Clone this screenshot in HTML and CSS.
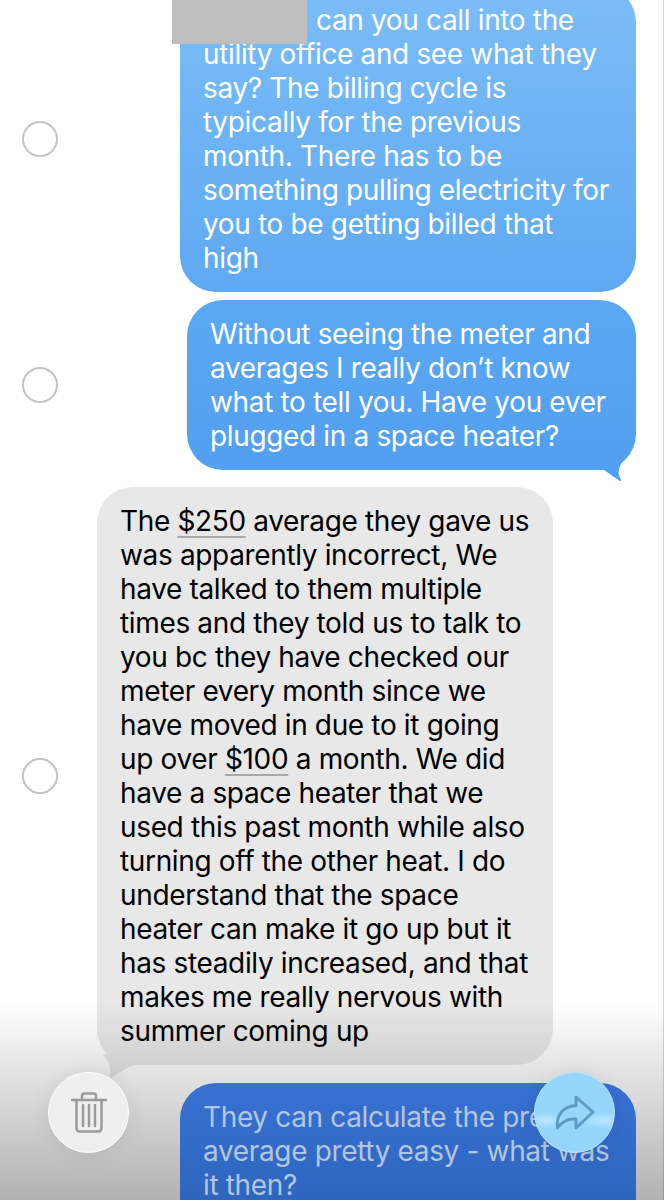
FILE: index.html
```html
<!DOCTYPE html>
<html lang="en">
<head>
    <meta charset="UTF-8">
    <meta name="viewport" content="width=device-width, initial-scale=1.0">
    <title>Messages</title>
    <link rel="stylesheet" href="styles.css">
</head>
<body>

<div class="screen">
    <div class="thread">
        <div class="row">
            <span class="radio"></span>
            <div class="bubble sent first">
                <span class="redacted"></span>
                <p class="indent">can you call into the<br>utility office and see what they<br>say? The billing cycle is<br>typically for the previous<br>month. There has to be<br>something pulling electricity for<br>you to be getting billed that<br>high</p>
            </div>
        </div>

        <div class="row">
            <span class="radio"></span>
            <div class="bubble sent second">
                <p>Without seeing the meter and<br>averages I really don’t know<br>what to tell you. Have you ever<br>plugged in a space heater?</p>
                <svg class="tail-right" width="36" height="32" viewBox="0 0 36 32"><path d="M0 20H4C10 24 15 28 20 31Q22 31.500 21 29.500C17 24 18 17 24 10L10 4Z" fill="#539ff0"/></svg>
            </div>
        </div>

        <div class="row">
            <span class="radio"></span>
            <div class="bubble received">
                <p>The <span class="link">$250</span> average they gave us<br>was apparently incorrect, We<br>have talked to them multiple<br>times and they told us to talk to<br>you bc they have checked our<br>meter every month since we<br>have moved in due to it going<br>up over <span class="link">$100</span> a month. We did<br>have a space heater that we<br>used this past month while also<br>turning off the other heat. I do<br>understand that the space<br>heater can make it go up but it<br>has steadily increased, and that<br>makes me really nervous with<br>summer coming up</p>
                <svg class="tail-left" width="36" height="26" viewBox="0 0 36 26"><path d="M0 0C3 5 9 10 7 24C15 20 22 14 34 10V0Z" fill="#e8e8e8"/></svg>
            </div>
        </div>
    </div>

    <div class="shade"></div>

    <div class="row last">
        <div class="bubble sent dimmed">
            <p>They can calculate the previous<br>average pretty easy - what was<br>it then?</p>
        </div>
    </div>

    <button class="action trash" type="button" aria-label="Delete">
        <svg width="36" height="41" viewBox="0 0 36 41" fill="none" stroke="#9b9b9b" stroke-width="2.5" stroke-linecap="round" stroke-linejoin="round">
            <path d="M1 8H35"/>
            <path d="M11 8V4C11 2.500 12 1.500 13.500 1.500H22.500C24 1.500 25 2.500 25 4V8"/>
            <path d="M5.500 8V36C5.500 38.500 7 39.500 9 39.500H27C29 39.500 30.500 38.500 30.500 36V8"/>
            <path d="M12 13V34M18 13V34M24 13V34"/>
        </svg>
    </button>

    <button class="action share" type="button" aria-label="Forward">
        <svg width="40" height="35" viewBox="0 0 40 35" fill="none" stroke="#5f9bc2" stroke-width="3" stroke-linejoin="round" stroke-linecap="round">
            <path d="M21 2L38 17L21 33V24C13 23.500 7 26 2.500 33C1 21 7 11.500 21 10.500Z"/>
        </svg>
    </button>
</div>

</body>
</html>
```

FILE: styles.css
```css
/* Reset */
* {
    margin: 0;
    padding: 0;
    box-sizing: border-box;
}

body {
    background: #fff;
    font-family: 'Inter', 'Roboto', sans-serif;
    font-size: 28px;
    line-height: 34px;
    letter-spacing: -0.35px;
    color: #000;
}

/* Screen */
.screen {
    position: relative;
    width: 664px;
    height: 1200px;
    overflow: hidden;
    background: #fff;
    box-shadow: inset -1px 0 0 #d8d8d8;
}

.thread {
    display: flex;
    flex-direction: column;
    margin-top: -14px;
}

/* Rows */
.row {
    display: flex;
    align-items: center;
    justify-content: flex-end;
    padding: 0 28px 0 22px;
    margin-bottom: 8px;
}

.row:nth-child(2) {
    margin-bottom: 17px;
}

.radio {
    width: 36px;
    height: 36px;
    margin-right: auto;
    border: 2.5px solid #c4c4c4;
    border-radius: 50%;
    flex-shrink: 0;
}

/* Bubbles */
.bubble {
    position: relative;
    padding: 17px 23px;
    border-radius: 36px;
    white-space: nowrap;
}

.sent {
    color: #fff;
}

.first {
    width: 456px;
    background: linear-gradient(#7bbdf7, #5fa9f2);
}

.second {
    width: 449px;
    background: linear-gradient(#5ba8f4, #539ff0);
}

.received {
    width: 456px;
    margin-right: 83px;
    background: #e8e8e8;
}

.dimmed {
    width: 456px;
    height: 150px;
    color: #b3c6de;
    background: linear-gradient(#3871d3, #2b63b9);
}

.last {
    position: absolute;
    top: 1083px;
    left: 0;
    right: 0;
    margin: 0;
}

.indent {
    text-indent: 113px;
}

.redacted {
    position: absolute;
    left: -8px;
    top: 14px;
    width: 135px;
    height: 44px;
    background: #bfbfbf;
}

.tail-right {
    position: absolute;
    right: 0;
    bottom: -12px;
}

.tail-left {
    position: absolute;
    left: 6px;
    bottom: -15px;
}

.link {
    text-decoration: underline;
    text-decoration-color: #a9a9a9;
    text-decoration-thickness: 1.5px;
    text-underline-offset: 5px;
}

/* Shade over the bottom of the page */
.shade {
    position: absolute;
    left: 0;
    right: 0;
    top: 1000px;
    height: 200px;
    background: #000;
    -webkit-mask-image: linear-gradient(transparent, #000);
    mask-image: linear-gradient(transparent, #000);
    opacity: 0.3;
}

/* Action buttons */
.action {
    position: absolute;
    top: 1072px;
    display: flex;
    align-items: center;
    justify-content: center;
    width: 81px;
    height: 81px;
    border-radius: 50%;
    border: 1.5px solid #fff;
    box-shadow: 0 0 24px rgba(0, 0, 0, 0.08);
}

.trash {
    left: 48px;
    background: #efefef;
}

.share {
    left: 534px;
    border-color: #b5e6ff;
    background:
        radial-gradient(ellipse 28% 10% at 14% 60%, #bce7ff, transparent),
        radial-gradient(ellipse 28% 10% at 86% 60%, #bce7ff, transparent),
        #96d6fc;
}
```
